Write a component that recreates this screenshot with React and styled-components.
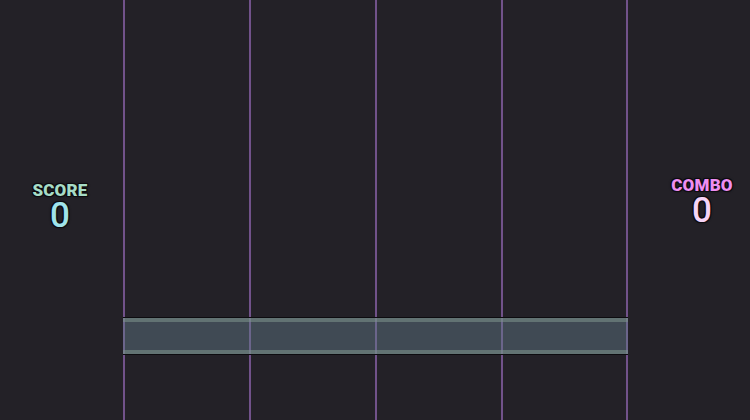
import React from 'react';
import styled, { createGlobalStyle } from 'styled-components';

const GlobalStyle = createGlobalStyle`
  html, body {
    margin: 0;
    padding: 0;
    background: #232127;
    font-family: Roboto, "Liberation Sans", sans-serif;
  }
`;

const lanes = [0, 1, 2, 3];

function App() {
  return (
    <>
      <GlobalStyle />
      <Stage>
        <SidePanel width={123} offset={-3}>
          <Counter color="#a6dcc6" valueColor="#9fe3ea" shift={-3}>
            <CounterLabel>SCORE</CounterLabel>
            <CounterValue>0</CounterValue>
          </Counter>
        </SidePanel>
        <Track>
          {lanes.map((i) => (
            <Lane key={i} last={i === lanes.length - 1} />
          ))}
          <HitBar />
        </Track>
        <SidePanel width={122} offset={26}>
          <Counter color="#ee8ef0" valueColor="#f6d4f6" shift={-8}>
            <CounterLabel>COMBO</CounterLabel>
            <CounterValue>0</CounterValue>
          </Counter>
        </SidePanel>
      </Stage>
    </>
  );
}

const Stage = styled.div`
  display: flex;
  width: 750px;
  height: 420px;
  overflow: hidden;
  background: #232127;
`;

const SidePanel = styled.div`
  width: ${({ width }) => width}px;
  flex-shrink: 0;
  box-sizing: border-box;
  display: flex;
  justify-content: center;
  align-items: center;
  padding-left: ${({ offset }) => Math.max(offset, 0)}px;
  padding-right: ${({ offset }) => Math.max(-offset, 0)}px;
`;

const Counter = styled.div`
  display: flex;
  flex-direction: column;
  align-items: center;
  transform: translateY(${({ shift }) => shift}px);
  color: ${({ color }) => color};
  text-shadow: -1px -1px 0 #0d0c10, 1px -1px 0 #0d0c10, -1px 1px 0 #0d0c10,
    1px 1px 0 #0d0c10, 0 -1px 0 #0d0c10, 0 1px 0 #0d0c10, -1px 0 0 #0d0c10,
    1px 0 0 #0d0c10, 0 0 3px #000;
  span:last-child {
    color: ${({ valueColor }) => valueColor};
  }
`;

const CounterLabel = styled.span`
  font-size: 17px;
  font-weight: 900;
  line-height: 17px;
  letter-spacing: 0.2px;
`;

const CounterValue = styled.span`
  font-size: 35px;
  font-weight: 500;
  line-height: 34px;
`;

const Track = styled.div`
  position: relative;
  display: flex;
  width: 505px;
  flex-shrink: 0;
  height: 100%;
`;

const Lane = styled.div`
  width: 126px;
  height: 100%;
  border-left: 2px solid #71528a;
  box-sizing: border-box;
  ${({ last }) => last && 'width: 127px; border-right: 2px solid #71528a;'}
`;

const HitBar = styled.div`
  position: absolute;
  left: 0;
  right: 0;
  top: 318px;
  height: 36px;
  box-sizing: border-box;
  background: rgba(100, 125, 140, 0.45);
  border-top: 4px solid rgba(125, 150, 140, 0.55);
  border-bottom: 4px solid rgba(125, 150, 140, 0.55);
  box-shadow: 0 -1px 0 #0d0c10, 0 1px 0 #0d0c10;
`;

export default App;
